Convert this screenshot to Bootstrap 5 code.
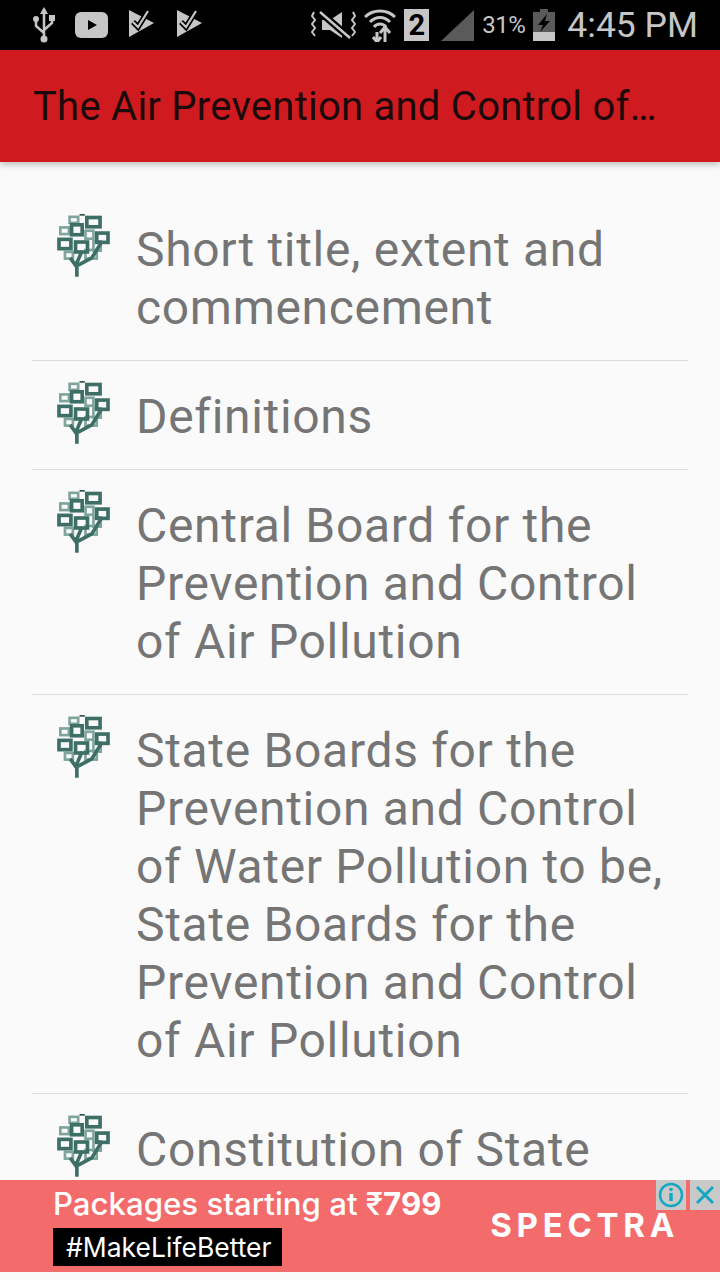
<!DOCTYPE html>
<html lang="en">
<head>
    <meta charset="UTF-8">
    <meta name="viewport" content="width=device-width, initial-scale=1.0">
    <title>The Air Prevention and Control of Pollution Act</title>
    <link href="https://cdn.jsdelivr.net/npm/bootstrap@5.3.3/dist/css/bootstrap.min.css" rel="stylesheet">
    <style>
        body { background: #fafafa; font-family: Roboto, "Liberation Sans", sans-serif; }
        .app-screen { height: 1280px; }
        .status-strip { height: 50px; background: #000; color: #c6c6c6; padding: 0 22px 0 33px; }
        .status-pct { font-size: 24px; letter-spacing: -0.5px; line-height: 50px; }
        .status-time { font-size: 35.5px; line-height: 50px; }
        .title-strip { height: 112px; background: #cf1a1f; padding: 2px 32px 0 33px; box-shadow: 0 3px 6px rgba(0,0,0,.22); z-index: 2; }
        .title-text { font-size: 40px; letter-spacing: .25px; color: #1c0a0a; white-space: nowrap; }
        .section-list { padding: 32px 32px 0; min-height: 0; }
        .section-row { border-bottom: 1px solid #dcdcdc; padding: 27px 0 23px; flex-shrink: 0; }
        .tree-ico { width: 53px; height: 64px; margin: -7px 27px 0 25px; flex-shrink: 0; filter: blur(.5px); }
        .section-text { font-size: 48px; line-height: 58px; letter-spacing: .68px; color: #757575; margin-left: -1px; }
        .promo-strip { height: 92px; background: #f36b6a; color: #fff; padding: 0 41px 0 53px; flex-shrink: 0; }
        .promo-line { font-family: Inter, sans-serif; font-size: 31.2px; line-height: 36px; font-weight: 500; margin-top: 6px; white-space: nowrap; }
        .promo-price { font-weight: 700; }
        .promo-tag { font-family: Inter, sans-serif; background: #000; font-size: 26.5px; line-height: 38px; width: 229px; margin-top: 6px; padding-left: 13px; white-space: nowrap; }
        .promo-logo { font-family: Inter, sans-serif; font-weight: 700; font-size: 33px; letter-spacing: 4.7px; line-height: 40px; margin-top: 25px; }
        .promo-btns { top: 0; right: 0; }
        .promo-btn { width: 30px; height: 30px; background: #c9c9c9; }
        .promo-gap { height: 8px; flex-shrink: 0; }
    </style>
</head>
<body>
<svg width="0" height="0" class="d-block">
    <defs>
        <symbol id="tree" viewBox="20 18 160 192">
            <g fill="none" stroke="#7fa49c" stroke-width="8">
                <rect x="30" y="58" width="26" height="20"/>
                <rect x="58" y="26" width="26" height="18"/>
                <rect x="106" y="68" width="24" height="24"/>
                <rect x="44" y="132" width="24" height="20"/>
                <rect x="106" y="126" width="34" height="26"/>
                <rect x="130" y="100" width="22" height="28"/>
            </g>
            <g fill="none" stroke="#3d6f66" stroke-width="11">
                <path d="M80 207V160M80 178L60 150M80 165L95 130M84 172L125 150L152 106"/>
                <rect x="26" y="94" width="36" height="28"/>
                <rect x="76" y="102" width="36" height="30"/>
                <rect x="64" y="50" width="32" height="30"/>
                <rect x="110" y="28" width="40" height="28"/>
                <rect x="140" y="75" width="34" height="28"/>
            </g>
            <path d="M88 20H104" stroke="#2f4f49" stroke-width="5"/>
        </symbol>
        <symbol id="playcheck" viewBox="0 0 28 30">
            <path d="M1 0L26 13L1 27Z" fill="#c6c6c6"/>
            <path d="M5 12L10 17L20 1" fill="none" stroke="#000" stroke-width="5.5"/>
            <path d="M5 12L10 17L20 1" fill="none" stroke="#c6c6c6" stroke-width="2.2"/>
        </symbol>
    </defs>
</svg>

<div class="app-screen d-flex flex-column overflow-hidden">
    <!-- Status bar -->
    <div class="status-strip d-flex justify-content-between align-items-center flex-shrink-0">
        <div class="d-flex align-items-center gap-3">
            <svg width="22" height="36" viewBox="0 0 22 36" class="me-1">
                <path d="M11 2V32M11 26L3 19V14M11 23L19 16V12" fill="none" stroke="#c6c6c6" stroke-width="2.5"/>
                <path d="M11 0L15 7H7Z" fill="#c6c6c6"/>
                <circle cx="3" cy="12" r="3" fill="#c6c6c6"/>
                <rect x="16" y="8" width="6" height="6" fill="#c6c6c6"/>
                <circle cx="11" cy="32" r="3.5" fill="#c6c6c6"/>
            </svg>
            <svg width="33" height="26" viewBox="0 0 33 26" class="me-1">
                <rect width="33" height="26" rx="6" fill="#c6c6c6"/>
                <path d="M13 8L22 13L13 18Z" fill="#000"/>
            </svg>
            <svg width="28" height="30" class="me-1"><use href="#playcheck"/></svg>
            <svg width="28" height="30"><use href="#playcheck"/></svg>
        </div>
        <div class="d-flex align-items-center gap-2">
            <svg width="45" height="28" viewBox="0 0 45 28">
                <path d="M11 9H19L31 1V27L19 19H11Z" fill="#c6c6c6"/>
                <path d="M9 1L39 27" stroke="#000" stroke-width="7"/>
                <path d="M9 1L39 27" stroke="#c6c6c6" stroke-width="2.5"/>
                <path d="M3 1L1 5L4 9L1 13L4 17L1 21L4 25M42 1L44 5L41 9L44 13L41 17L44 21L41 25" fill="none" stroke="#c6c6c6" stroke-width="2"/>
            </svg>
            <svg width="32" height="34" viewBox="0 0 32 34">
                <path d="M1 9C9 1 23 1 31 9M6 14C12 8 20 8 26 14M10 19C13 15 19 15 22 19" fill="none" stroke="#c6c6c6" stroke-width="3"/>
                <path d="M13 24V34M9 29L13 34L17 29M21 34V20M16 25L21 19L26 25" fill="none" stroke="#c6c6c6" stroke-width="3"/>
            </svg>
            <span class="d-inline-flex align-items-center justify-content-center fw-bold" style="width:25px;height:32px;background:#c6c6c6;color:#000;font-size:29px;line-height:32px">2</span>
            <svg width="33" height="31" viewBox="0 0 33 31" class="ms-1"><path d="M0 31L33 0V31Z" fill="#5a5a5a"/></svg>
            <span class="status-pct">31%</span>
            <svg width="22" height="32" viewBox="0 0 22 32">
                <rect x="7" y="0" width="8" height="3" fill="#5a5a5a"/>
                <rect x="0" y="3" width="22" height="29" fill="#5a5a5a"/>
                <rect x="0" y="23" width="22" height="9" fill="#c6c6c6"/>
                <path d="M14 5L5 16H10L7 23L17 12H12Z" fill="#000"/>
            </svg>
            <span class="status-time ms-1">4:45 PM</span>
        </div>
    </div>

    <!-- Toolbar -->
    <div class="title-strip d-flex align-items-center flex-shrink-0">
        <div class="title-text">The Air Prevention and Control of…</div>
    </div>

    <!-- Sections -->
    <div class="section-list flex-grow-1 overflow-hidden d-flex flex-column">
        <div class="section-row d-flex">
            <svg class="tree-ico"><use href="#tree"/></svg>
            <div class="section-text">Short title, extent and commencement</div>
        </div>
        <div class="section-row d-flex">
            <svg class="tree-ico"><use href="#tree"/></svg>
            <div class="section-text">Definitions</div>
        </div>
        <div class="section-row d-flex">
            <svg class="tree-ico"><use href="#tree"/></svg>
            <div class="section-text">Central Board for the Prevention and Control of Air Pollution</div>
        </div>
        <div class="section-row d-flex">
            <svg class="tree-ico"><use href="#tree"/></svg>
            <div class="section-text">State Boards for the Prevention and Control of Water Pollution to be, State Boards for the Prevention and Control of Air Pollution</div>
        </div>
        <div class="section-row d-flex">
            <svg class="tree-ico"><use href="#tree"/></svg>
            <div class="section-text">Constitution of State</div>
        </div>
    </div>

    <!-- Ad banner -->
    <div class="promo-strip position-relative d-flex justify-content-between">
        <div>
            <div class="promo-line">Packages starting at ₹<span class="promo-price">799</span></div>
            <div class="promo-tag">#MakeLifeBetter</div>
        </div>
        <div class="promo-logo">SPECTRA</div>
        <div class="promo-btns position-absolute d-flex gap-1">
            <div class="promo-btn">
                <svg width="30" height="30" viewBox="0 0 30 30" class="d-block">
                    <circle cx="15" cy="15" r="11" fill="none" stroke="#12a8c4" stroke-width="2.5"/>
                    <circle cx="15" cy="9.5" r="1.8" fill="#12a8c4"/>
                    <path d="M15 13V21" stroke="#12a8c4" stroke-width="3.5"/>
                </svg>
            </div>
            <div class="promo-btn">
                <svg width="30" height="30" viewBox="0 0 30 30" class="d-block">
                    <path d="M7 7L23 23M23 7L7 23" stroke="#12a8c4" stroke-width="3"/>
                </svg>
            </div>
        </div>
    </div>
    <div class="promo-gap"></div>
</div>

<script src="https://cdn.jsdelivr.net/npm/bootstrap@5.3.3/dist/js/bootstrap.bundle.min.js"></script>
</body>
</html>
